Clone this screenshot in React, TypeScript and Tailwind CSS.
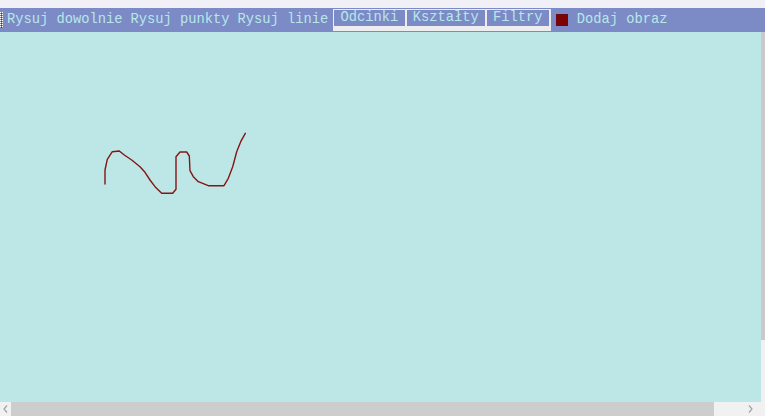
import React from 'react'

const mono = { fontFamily: '"Liberation Mono", "Courier New", monospace' }

// stroke the user drew on the canvas
const stroke: [number, number][] = [
  [105, 184], [105, 170], [107.3, 159.3], [112.3, 151.7], [119.3, 151], [124.3, 155],
  [131.7, 160], [140, 166.7], [145, 172.3], [150, 180], [155, 186.7], [161.7, 193.3],
  [172.7, 193.3], [176, 189.3], [176, 156.7], [180, 152], [186.7, 152], [189.3, 156],
  [190, 170.7], [193.3, 176.7], [198.3, 181.7], [208.3, 185.7], [224, 185.7], [228.3, 178.3],
  [232.7, 166.7], [236.7, 151.7], [240.7, 141.7], [245.3, 133.3],
]

function Grip() {
  return (
    <svg width="3" height="16" className="shrink-0 self-center" viewBox="0 0 3 16">
      {Array.from({ length: 8 }).map((_, i) => (
        <g key={i}>
          <rect x={0} y={i * 2} width={1} height={1} fill="#ffffff" />
          <rect x={1} y={i * 2 + 1} width={1} height={1} fill="#3a3f5a" />
          <rect x={2} y={i * 2} width={1} height={1} fill="#ffffff" />
        </g>
      ))}
    </svg>
  )
}

export default function App() {
  const d = stroke.map(([x, y], i) => `${i ? 'L' : 'M'}${x} ${y}`).join(' ')

  return (
    <div className="w-[765px] h-[416px] flex flex-col bg-[#f2f0f7] overflow-hidden text-[13.75px] leading-4" style={mono}>
      <div className="h-2 shrink-0" />

      <div className="h-6 shrink-0 bg-[#7c8ac6] flex items-center text-[#b6e8ea] whitespace-pre">
        <Grip />
        <span className="ml-[4px] cursor-pointer">Rysuj dowolnie</span>
        <span className="ml-[8px] cursor-pointer">Rysuj punkty</span>
        <span className="ml-[8px] cursor-pointer">Rysuj linie</span>
        <div className="ml-[4.5px] self-start mt-px h-[22px] w-[218px] bg-[#ededf0] flex items-start gap-[2px] pl-px pt-px">
          <button className="w-[71px] h-4 bg-[#7c8ac6] text-center">Odcinki</button>
          <button className="w-[78px] h-4 bg-[#7c8ac6] text-center">Kształty</button>
          <button className="w-[62px] h-4 bg-[#7c8ac6] text-center">Filtry</button>
        </div>
        <span className="ml-[5px] w-3 h-3 bg-[#7d0303] border border-[#6a0a14]" />
        <span className="ml-[9px] cursor-pointer">Dodaj obraz</span>
      </div>

      <div className="flex-1 flex min-h-0">
        <div className="flex-1 bg-[#bde7e6] relative">
          <svg className="absolute inset-0" width="761" height="370" viewBox="0 32 761 370">
            <path d={d} fill="none" stroke="#861414" strokeWidth={1.4} strokeLinejoin="round" strokeLinecap="round" />
          </svg>
        </div>
        <div className="w-1 flex flex-col bg-[#f1f1f1]">
          <div className="h-[308px] bg-[#c9c9c9]" />
        </div>
      </div>

      <div className="h-[14px] shrink-0 flex bg-[#f1f1f1] items-stretch">
        <div className="w-[11px] flex items-center justify-center">
          <svg width="5" height="8" viewBox="0 0 5 8"><path d="M4 0.5 L1 4 L4 7.5" fill="none" stroke="#a3a3a3" strokeWidth={1.2} /></svg>
        </div>
        <div className="w-[703px] bg-[#cdcdcd]" />
        <div className="flex-1 flex items-center justify-end pr-[12px]">
          <svg width="5" height="8" viewBox="0 0 5 8"><path d="M1 0.5 L4 4 L1 7.5" fill="none" stroke="#a3a3a3" strokeWidth={1.2} /></svg>
        </div>
      </div>
    </div>
  )
}
